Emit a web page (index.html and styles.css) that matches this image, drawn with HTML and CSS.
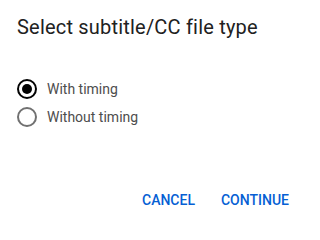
FILE: index.html
```html
<!DOCTYPE html>
<html>
<head>
<meta charset="utf-8">
<link rel="stylesheet" href="styles.css">
</head>
<body>
<div class="dialog">
  <h2 class="title">Select subtitle/CC file type</h2>
  <div class="options">
    <label class="option">
      <span class="radio checked"><span class="dot"></span></span>
      <span class="label">With timing</span>
    </label>
    <label class="option">
      <span class="radio"></span>
      <span class="label">Without timing</span>
    </label>
  </div>
  <div class="actions">
    <button class="btn">CANCEL</button>
    <button class="btn">CONTINUE</button>
  </div>
</div>
</body>
</html>
```
FILE: styles.css
```css
html, body {
  margin: 0;
  padding: 0;
  background: #fff;
}
.dialog {
  width: 302px;
  height: 217px;
  box-sizing: border-box;
  padding: 15px 5px 0 17px;
  font-family: Roboto, "Liberation Sans", sans-serif;
  display: flex;
  flex-direction: column;
}
.title {
  margin: 0;
  font-size: 20px;
  font-weight: 400;
  line-height: 24px;
  letter-spacing: 0.2px;
  color: #212121;
}
.options {
  margin-top: 40px;
  display: flex;
  flex-direction: column;
  gap: 8px;
}
.option {
  display: flex;
  align-items: center;
  gap: 10px;
  height: 20px;
}
.radio {
  width: 20px;
  height: 20px;
  box-sizing: border-box;
  border: 2px solid #717171;
  border-radius: 50%;
  display: flex;
  align-items: center;
  justify-content: center;
}
.radio.checked {
  border-color: #030303;
}
.dot {
  width: 10px;
  height: 10px;
  border-radius: 50%;
  background: #030303;
}
.label {
  font-size: 14px;
  color: #4d4d4d;
}
.actions {
  margin-top: auto;
  margin-bottom: 4px;
  display: flex;
  justify-content: flex-end;
  gap: 10px;
}
.btn {
  background: none;
  border: none;
  padding: 0 8px;
  height: 26px;
  font-family: Roboto, "Liberation Sans", sans-serif;
  font-size: 14px;
  font-weight: 500;
  color: #065fd4;
}
```
